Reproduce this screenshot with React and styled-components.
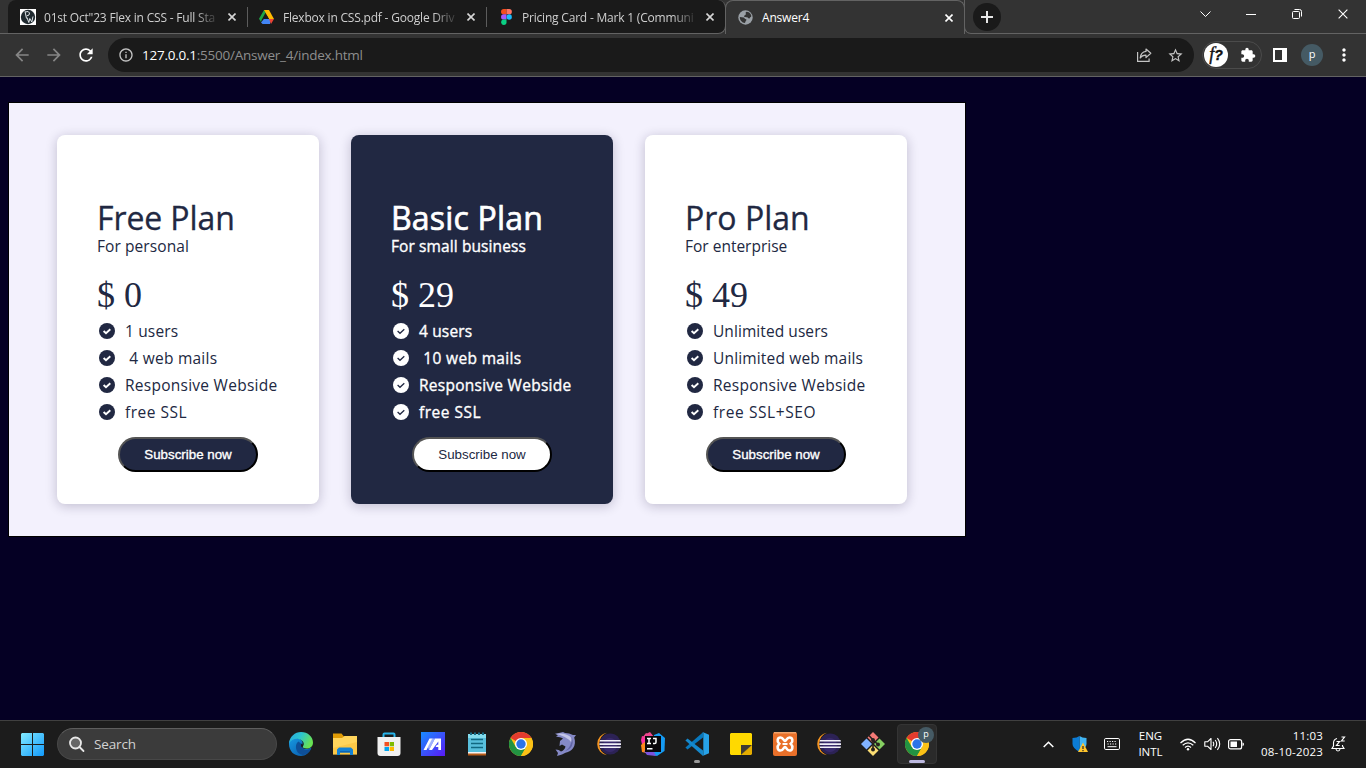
import React from "react";
import styled, { createGlobalStyle } from "styled-components";
import { MdArrowBack, MdArrowForward, MdRefresh, MdExtension, MdStarBorder, MdInfoOutline, MdMoreVert } from "react-icons/md";

const Global = createGlobalStyle`
  * { box-sizing: border-box; }
  body { margin: 0; background: #050024; overflow: hidden; }
  svg { display: block; flex: none; }
`;

const ui = `"Open Sans", "Noto Sans", sans-serif`;

const Screen = styled.div`
  width: 1366px;
  height: 768px;
  display: flex;
  flex-direction: column;
  font-family: ${ui};
`;

/* ---------- browser chrome ---------- */
const TabStrip = styled.div`
  height: 34px;
  flex: none;
  display: flex;
  background: #333333;
`;
const StripEdge = styled.div`
  width: 8px;
  border-bottom: 1px solid #636363;
`;
const InactiveTabs = styled.div`
  display: flex;
  width: 718px;
  background: #1a1a1a;
  border-radius: 8px 8px 8px 0;
  border-bottom: 1px solid #636363;
  border-right: 1px solid #636363;
`;
const Tab = styled.div`
  width: 239px;
  flex: none;
  height: 33px;
  display: flex;
  align-items: center;
  padding: 1px 11px 0 12px;
  position: relative;
`;
const TabDivider = styled.i`
  position: absolute;
  right: -1px;
  top: 7px;
  width: 1px;
  height: 20px;
  background: #5c5c5c;
`;
const ActiveTab = styled(Tab)`
  height: 34px;
  width: 240px;
  margin-left: -1px;
  padding: 0 11px 0 12px;
  background: #333333;
  border: 1px solid #636363;
  border-bottom: 0;
  border-radius: 8px 8px 0 0;
`;
const TabTitle = styled.span`
  width: 176px;
  margin-left: 8px;
  white-space: nowrap;
  font-size: 12px;
  letter-spacing: -0.2px;
  color: ${(p) => (p.$active ? "#ffffff" : "#cfcfcf")};
  mask-image: ${(p) => (p.$active ? "none" : "linear-gradient(90deg, #000 150px, transparent 176px)")};
`;
const TabClose = styled.span`
  margin-left: auto;
  display: flex;
`;
const StripRest = styled.div`
  flex: 1;
  display: flex;
  border-bottom: 1px solid #636363;
  border-left: 1px solid #636363;
  border-bottom-left-radius: 7px;
  margin-left: -1px;
  background: #333;
`;
const NewTab = styled.div`
  width: 28px;
  height: 28px;
  margin: 3px 0 0 8px;
  border-radius: 50%;
  background: #1a1a1a;
  display: grid;
  place-items: center;
`;
const WindowControls = styled.div`
  margin-left: auto;
  display: flex;
  height: 28px;
`;
const WindowButton = styled.div`
  width: 46px;
  display: grid;
  place-items: center;
`;

const Toolbar = styled.div`
  height: 43px;
  flex: none;
  display: flex;
  align-items: center;
  background: #333333;
  border-bottom: 1px solid #636363;
  padding-left: 12px;
`;
const NavButton = styled.span`
  width: 20px;
  margin-right: 12px;
  color: ${(p) => (p.$off ? "#868686" : "#ffffff")};
`;
const AddressBar = styled.div`
  width: 1086px;
  height: 34px;
  border-radius: 17px;
  background: #1a1a1a;
  display: flex;
  align-items: center;
  padding: 0 10px 0 10px;
  color: #c4c4c4;
`;
const Url = styled.span`
  margin-left: 8px;
  flex: 1;
  font-size: 13.5px;
  letter-spacing: -0.24px;
  color: #8e8e8e;
  b { font-weight: 400; color: #fff; }
`;
const StarSlot = styled.span`
  margin-left: 15px;
`;
const Extensions = styled.div`
  margin-left: 8px;
  width: 60px;
  height: 28px;
  border: 1px solid #4b4b4b;
  border-radius: 14px;
  display: flex;
  align-items: center;
  color: #fff;
`;
const FontBadge = styled.span`
  width: 24px;
  height: 24px;
  margin-left: 1px;
  border-radius: 50%;
  background: #fff;
  color: #111;
  font: italic 400 18px/22px "Liberation Serif", serif;
  -webkit-text-stroke: 0.4px #111;
  text-align: center;
  b { font: italic 700 14px "Liberation Sans", sans-serif; }
`;
const PuzzleSlot = styled.span`
  margin-left: 12px;
`;
const SidePanel = styled.span`
  margin-left: 11px;
  width: 14px;
  height: 14px;
  border: 2px solid #fff;
  border-right-width: 5px;
`;
const Avatar = styled.span`
  width: ${(p) => p.$size}px;
  height: ${(p) => p.$size}px;
  border-radius: 50%;
  background: #455a64;
  color: #fff;
  font-size: ${(p) => p.$font}px;
  line-height: ${(p) => p.$size - 3}px;
  text-align: center;
`;
const ToolbarAvatar = styled(Avatar)`
  margin: 0 11px 0 14px;
`;

/* ---------- page ---------- */
const Page = styled.main`
  flex: 1;
  padding: 25px 0 0 8px;
  background: #050024;
`;
const Board = styled.section`
  width: 958px;
  height: 435px;
  border: 1px solid #000;
  background: #f3f1fd;
  padding: 32px 48px;
  display: flex;
  gap: 32px;
`;
const Card = styled.article`
  width: 262px;
  height: 369px;
  flex: none;
  padding: 61px 0 0 40px;
  border-radius: 8px;
  background: ${(p) => (p.$dark ? "#212842" : "#ffffff")};
  color: ${(p) => (p.$dark ? "#ffffff" : "#212842")};
  -webkit-text-stroke: ${(p) => (p.$dark ? "0.35px #fff" : "0")};
  box-shadow: 0 2px 12px rgba(30, 20, 60, 0.24);
`;
const PlanName = styled.h1`
  margin: 0;
  font-size: 32px;
  font-weight: 400;
  line-height: 44px;
  letter-spacing: ${(p) => p.$ls}px;
  white-space: nowrap;
  -webkit-text-stroke: ${(p) => (p.$dark ? "0.7px #fff" : "0.3px #212842")};
`;
const Audience = styled.p`
  margin: -5px 0 0;
  font-size: 15.5px;
  line-height: 22px;
  letter-spacing: ${(p) => p.$ls}px;
`;
const Price = styled.div`
  margin-top: 17px;
  font: 36px/42px "Liberation Serif", serif;
  -webkit-text-stroke: 0;
`;
const Features = styled.ul`
  list-style: none;
  margin: 1px 0 0;
  padding: 0 0 0 2px;
`;
const Feature = styled.li`
  height: 27px;
  display: flex;
  align-items: center;
  font-size: 15.5px;
  letter-spacing: ${(p) => p.$ls}px;
  white-space: pre;
  svg { margin-right: 10px; }
`;
const Subscribe = styled.button`
  display: block;
  width: 140px;
  height: 35px;
  margin: 12px 0 0 21px;
  padding: 0;
  border: 2px outset #000;
  border-radius: 20px;
  background: ${(p) => (p.$dark ? "#ffffff" : "#212842")};
  color: ${(p) => (p.$dark ? "#212842" : "#ffffff")};
  -webkit-text-stroke: ${(p) => (p.$dark ? "0" : "0.35px #fff")};
  font: 13.33px "Liberation Sans", Arial, sans-serif;
`;

/* ---------- taskbar ---------- */
const Taskbar = styled.footer`
  height: 48px;
  flex: none;
  display: flex;
  align-items: center;
  background: #1c1c1c;
  border-top: 1px solid #404040;
  padding: 0 0 1px 21px;
  color: #fff;
`;
const SearchBox = styled.div`
  width: 220px;
  height: 32px;
  margin: 0 2px 0 13px;
  border-radius: 16px;
  border: 1px solid #474747;
  border-top-color: #5e5e5e;
  background: #3b3b3b;
  display: flex;
  align-items: center;
  padding-left: 10px;
  gap: 9px;
  font-size: 13.5px;
  letter-spacing: -0.15px;
  color: #d2d2d2;
`;
const AppSlot = styled.div`
  width: 40px;
  height: 40px;
  margin: 0 2px;
  border-radius: 4px;
  border: 1px solid ${(p) => (p.$active ? "#343434" : "transparent")};
  background: ${(p) => (p.$active ? "#2a2a2a" : "transparent")};
  display: grid;
  place-items: center;
  position: relative;
  &::after {
    content: "";
    display: ${(p) => (p.$mark ? "block" : "none")};
    position: absolute;
    bottom: 0;
    left: calc(50% - ${(p) => p.$mark / 2}px);
    width: ${(p) => p.$mark}px;
    height: 3px;
    border-radius: 2px;
    background: ${(p) => (p.$active ? "#bdb9e0" : "#9a9a9a")};
  }
`;
const CornerAvatar = styled(Avatar)`
  position: absolute;
  right: 2px;
  top: 2px;
`;
const Tray = styled.div`
  margin-left: auto;
  display: flex;
  align-items: center;
  width: 330px;
  font-size: 11.5px;
  line-height: 16px;
  letter-spacing: 0;
`;
const TrayItem = styled.div`
  width: ${(p) => p.$w}px;
  display: flex;
  justify-content: center;
  text-align: center;
`;
const Clock = styled.div`
  width: 76px;
  text-align: right;
  white-space: nowrap;
  letter-spacing: 0.2px;
`;

/* ---------- icons ---------- */
const Cross = ({ size = 8, color = "#d6d6d6", w = 1.6 }) => (
  <svg width={size} height={size} viewBox="0 0 8 8" stroke={color} strokeWidth={w} fill="none"><path d="M.5.5l7 7M7.5.5l-7 7" /></svg>
);
const Check = ({ dark }) => (
  <svg width="16" height="16" viewBox="0 0 16 16" fill="none">
    <circle cx="8" cy="8" r="8" fill={dark ? "#fff" : "#212842"} />
    <path d="M4.6 8l2.4 2.300 4.300-4" stroke={dark ? "#212842" : "#fff"} strokeWidth={dark ? 1.3 : 1.9} />
  </svg>
);
const PwIcon = () => (
  <svg width="16" height="16" viewBox="0 0 16 16" fill="none">
    <path fill="#fff" d="M0 0h16v16H0z" /><circle cx="8" cy="8" r="7.2" fill="#202a30" />
    <path d="M5 2.500l1.500 7M5 3q4-1.500 4.500 1T6.500 7M7 8.500l1.800 5 1-4 2 3.500L13 7.500" stroke="#dfe5e8" strokeWidth="1" />
  </svg>
);
const DriveIcon = () => (
  <svg width="15" height="14" viewBox="0 0 15 14">
    <path fill="#1ea446" d="M5 0h3L2.700 9.700 2 12 0 8.800z" /><path fill="#0f8a3c" d="M5 0h2.500v4.500z" />
    <path fill="#ffba00" d="M5 0h5l5 9h-5z" /><path fill="#1a1a1a" d="M7.500 4.700L9.900 9H5.100z" />
    <path fill="#4285f4" d="M4.900 9H12l-1 5H3.600L2 12.400z" /><path fill="#ea4335" d="M10 9h5l-3 5z" />
  </svg>
);
const FigmaIcon = () => (
  <svg width="11" height="16" viewBox="0 0 11 16">
    <path fill="#f24e1e" d="M5.500 0H2.700a2.650 2.650 0 000 5.300h2.800z" /><path fill="#ff7262" d="M5.500 0h2.700a2.650 2.650 0 010 5.300H5.500z" />
    <path fill="#a259ff" d="M5.500 5.300H2.700a2.650 2.650 0 000 5.300h2.800z" /><circle cx="8.200" cy="8" r="2.650" fill="#1abcfe" />
    <path fill="#0acf83" d="M5.500 10.600H2.700a2.650 2.650 0 102.800 2.700z" />
  </svg>
);
const GlobeIcon = () => (
  <svg width="15" height="15" viewBox="0 0 15 15">
    <circle cx="7.500" cy="7.500" r="7.200" fill="#9aa0a6" />
    <path fill="#333" d="M8.500 1.800c2.200 0 4.200 1.600 4.800 4 .1 1.300-1 1-1.500 2.100-.5 1-1.600.5-2-.5L7.200 7C6 7 5.800 6.200 6.500 5.400L8.200 4c-.8-.5-.9-1.500.3-2.200zM1.800 7l3.800.6c1.100.3.9 1.300 1.700 1.500 1.400.2 1.500 1.100.6 1.700-.6.5-.3 1.400-1 2.200C4 12.700 1.700 10.300 1.800 7z" />
  </svg>
);
const ShareIcon = () => (
  <svg width="16" height="16" viewBox="0 0 16 16" fill="none" stroke="#c4c4c4" strokeWidth="1.200">
    <path d="M1.600 5v9.400h11.500V11.500" /><path d="M10 2l4.800 4.300L10 10.600V8.200C7.600 8.100 5.500 9 4.200 11c.3-3.200 2-6.100 5.800-6.600z" strokeLinejoin="round" />
  </svg>
);
const StartIcon = () => (
  <svg width="23" height="23" viewBox="0 0 23 23">
    <defs><linearGradient id="win" x2="1" y2="1"><stop stopColor="#82eaff" /><stop offset="1" stopColor="#1199fb" /></linearGradient></defs>
    <path fill="url(#win)" d="M1 0h10v11H0V1zM12 0h10l1 1v10H12zM0 12h11v11H1l-1-1zM12 12h11v10l-1 1H12z" />
  </svg>
);
const EdgeIcon = () => (
  <svg width="24" height="24" viewBox="0 0 24 24">
    <defs>
      <linearGradient id="edgeTop" x2="1" y2=".4"><stop stopColor="#26a3df" /><stop offset=".5" stopColor="#2cc5cf" /><stop offset="1" stopColor="#68e254" /></linearGradient>
      <linearGradient id="edgeLow" x2="1" y2="1"><stop stopColor="#1799e1" /><stop offset="1" stopColor="#0755a8" /></linearGradient>
    </defs>
    <path fill="url(#edgeLow)" d="M0 11c1-5 5.500-6 9.500-4.500C13 7.700 14 10 13.500 12c-2 3 1 5.500 4.500 5 2-.3 3-1 4.500-1.500C20.500 21 16.500 24 12 24 5 24 0 19 0 12z" />
    <path fill="#0e4f98" d="M9.500 9.500C6 12 6 18 10 21.500c4 3 9.500 1 12-5-3 2.500-9.500 2-9-4z" />
    <path fill="url(#edgeTop)" d="M0 11.500C.5 4.500 6 0 12 0c7 0 12 5 12 10.500 0 4-3 6-6.500 6-3 0-4.300-1-3.500-2.200 1.500-2 .8-4.500-1.500-6C8 5.200 2.500 7 0 11.500z" />
    <path fill="#1c1c1c" d="M12.500 11.500q1.500 1 1 2.500-1 1 .3 2-2-1-1.800-3z" />
  </svg>
);
const FolderIcon = () => (
  <svg width="26" height="24" viewBox="0 0 26 24">
    <path fill="#e09b05" d="M1 1.500h8.500L12 4.500h12V9H1z" /><path fill="#ffd55c" d="M1 6h9l2.500-2H25v18.500H1z" />
    <path fill="#f7b92f" d="M1 16l24-6v12.500H1z" opacity=".45" /><path fill="#1282d6" d="M5 23v-5.500L7 15.500h12l2 2V23h-3v-2.500H8V23z" /><path fill="#0b65b5" d="M8 19h10v1.500H8z" />
  </svg>
);
const StoreIcon = () => (
  <svg width="24" height="24" viewBox="0 0 24 24">
    <path d="M6.500 6V2.500q0-1 1-1h9q1 0 1 1V6" fill="none" stroke="#27b4ea" strokeWidth="2" />
    <path fill="#f0f0f0" d="M.5 5h23v16q0 3-3 3h-17q-3 0-3-3z" />
    <path fill="#f25022" d="M7.500 10H12v4.300H7.500z" /><path fill="#7fba00" d="M12.700 10H17v4.300h-4.300z" /><path fill="#00a4ef" d="M7.500 15H12v4H7.500z" /><path fill="#ffb900" d="M12.700 15H17v4h-4.300z" />
  </svg>
);
const ArmouryIcon = () => (
  <svg width="24" height="24" viewBox="0 0 24 24">
    <defs><linearGradient id="asus" x1="0" y1="0" x2="1" y2="1"><stop stopColor="#188cff" /><stop offset="1" stopColor="#5a19f5" /></linearGradient></defs>
    <path fill="url(#asus)" d="M0 0h24v24H0z" /><path fill="#fff" d="M2.500 18L8.500 6.500h3L5.500 18zM8 18l6-11.500h6V18h-2.700v-3h-2.800l1.400-2.300h1.400V9.500L11 18z" /><path fill="#cbd5ff" d="M8 18l6-11.500h-3L6.800 14.800z" opacity=".7" />
  </svg>
);
const NotepadIcon = () => (
  <svg width="20" height="24" viewBox="0 0 20 24">
    <path fill="#b65b19" d="M1 20h18v3.500H1z" /><path fill="#f3f3f3" d="M1 18h18v3.500H1z" /><path fill="#58bfdc" d="M1 2h18v18H1z" /><path fill="#83dced" d="M1 2h18v4H1z" />
    <path d="M4 .5v2.500M8 .5v2.500M12 .5v2.500M16 .5v2.500" stroke="#176d87" strokeWidth="2" /><path d="M4 7.500h12M4 11.500h12M4 15.500h12" stroke="#116881" strokeWidth="1.500" />
  </svg>
);
const ChromeIcon = () => (
  <svg width="24" height="24" viewBox="0 0 24 24">
    <circle cx="12" cy="12" r="12" fill="#fbc116" /><path fill="#e33b2e" d="M12 12L1.600 6A12 12 0 0122.400 6H12z" />
    <path fill="#229342" d="M1.600 6a12 12 0 0010.400 18l5.200-9L12 12 6.800 15z" /><path fill="#fbc116" d="M12 24l5.200-9c1-2 1-6-1.200-9h6.400A12 12 0 0112 24z" />
    <circle cx="12" cy="12" r="6" fill="#fff" /><circle cx="12" cy="12" r="4.700" fill="#2b73e8" />
  </svg>
);
const DolphinIcon = () => (
  <svg width="24" height="24" viewBox="0 0 24 24">
    <path fill="#8589c6" d="M2 1.800L6 1l4-1 2 1c3 0 5.500.8 8 2h3l-1.800 2.500c1.300 4 1 8-1.200 10.800-1.500 2.300-4 3.700-7.500 4.500L9 22.500l-5 1.500 1-3-2.500-3.500c2.500.2 4 .8 5.500 2 2.500-1 4-2.500 4.500-5L9 12.500 6.500 14l.5-5 3-2.500C8 5.500 6 5 3 4.500l2-1.200z" />
    <path fill="#c3c5e8" d="M3 2c6-1.500 12 0 15.500 4 1.300 2 1.500 5 .5 8-.3-4-2-6-5-7.500C11 4.500 8 3 3 2z" /><path fill="#6165a8" d="M18.500 5c2.500 5 1.500 9-2 12-1.500 1-3 1.500-4.500 2 5-3 7-8 6.500-14z" />
  </svg>
);
const EclipseIcon = () => (
  <svg width="24" height="24" viewBox="0 0 24 24">
    <path fill="#f7941e" d="M10 .800A11.300 11.300 0 0010 23.200 12 12 0 0110 .800z" /><circle cx="13.200" cy="12" r="10.600" fill="#2c2255" /><circle cx="13" cy="13" r="7" fill="#41307c" opacity=".6" />
    <path fill="#f1f0f7" d="M3 8h20.500l.5 1.600H2.600zM2.400 11.200H24v1.700H2.400zM2.600 14.400H24l-.5 1.600H3z" />
  </svg>
);
const IntellijIcon = () => (
  <svg width="24" height="24" viewBox="0 0 24 24">
    <path fill="#fc31a0" d="M1 4l8 2-2 15-5-4-2-9z" /><path fill="#ff8a1b" d="M0 13l5-4 4 13-8-2z" /><path fill="#f0458f" d="M5 2l4-2 4 5zM1 6l4-5 9 5H3z" /><path fill="#159bf3" d="M13 3l5-2 6 5-.5 13-7.500 5-8-2z" /><path fill="#7b52dd" d="M3 19l9-1 3 6-9-1z" />
    <path fill="#09070b" d="M4 4h16v16H4z" />
    <path fill="none" stroke="#fff" strokeWidth="1.500" d="M6 6.500h4M8 6.500v5M6 11.500h4M12 6.500h3v3.700q0 1.300-1.300 1.300H12M6 16.800h5.500" />
  </svg>
);
const VscodeIcon = () => (
  <svg width="24" height="24" viewBox="0 0 24 24">
    <path fill="#0878bd" d="M.4 15.500L2.500 17.400 18 5.500V.200z" /><path fill="#1588cc" d="M.4 8.500L2.500 6.600 18 18.500V24z" /><path fill="#27a2e8" d="M17.500 0L24 2.700v18.600L17.500 24q.8-.5.8-1.500v-21q0-1-.8-1.500z" />
  </svg>
);
const StickyIcon = () => (
  <svg width="22" height="22" viewBox="0 0 22 22"><path fill="#ffd900" d="M1 0h20l1 1v11l-11 10H1l-1-1V1z" /><path fill="#3f3b34" d="M11 12h11L11 22z" /><path fill="#e5ad00" d="M22 12v9l-1 1H11z" /></svg>
);
const XamppIcon = () => (
  <svg width="24" height="24" viewBox="0 0 24 24" fill="none">
    <rect width="24" height="24" rx="2" fill="#e9702a" /><path fill="#f0a46d" d="M1 0h22v1.500H1z" />
    <path d="M7.500 5.500c3 0 3 3.500 4.500 3.500s1.500-3.500 4.500-3.500 4 4 1.300 6.300c2.700 2.700 1.700 6.700-1.300 6.700s-3-3.500-4.500-3.500-1.500 3.500-4.500 3.500-4-4-1.300-6.700C3.500 9.500 4.500 5.500 7.500 5.500z" stroke="#fff" strokeWidth="2.600" />
    <path d="M9.500 12h5" stroke="#fff" strokeWidth="2" />
  </svg>
);
const GitIcon = () => (
  <svg width="24" height="24" viewBox="0 0 24 24">
    <path fill="#f37a76" d="M12 0l5.500 5.500L12 11 6.500 5.500z" /><path fill="#80b2ff" d="M5.500 6.500L11 12l-5.500 5.500L0 12z" /><path fill="#85cf61" d="M18.500 6.500L24 12l-5.500 5.500L13 12z" /><path fill="#fbdd73" d="M12 13l5.500 5.500L12 24l-5.500-5.500z" />
    <path d="M8 3.500l4 4.500v9M12 8l5 4.500" fill="none" stroke="#27221f" strokeWidth="1.600" /><g fill="#27221f"><circle cx="12" cy="8" r="2" /><circle cx="17" cy="12.500" r="2" /><circle cx="12" cy="17.500" r="2" /></g>
  </svg>
);
const ShieldIcon = () => (
  <svg width="16" height="17" viewBox="0 0 16 17">
    <path fill="#41b5f3" d="M7.500 0Q10 2 14.500 2v6q0 4-7 8z" /><path fill="#0c7cd5" d="M7.500 0Q5 2 .5 2v6q0 4 7 8z" />
    <path fill="#ffc52b" d="M11 6.500l5 9.500H6z" /><path d="M11 10v3M11 14v1.200" stroke="#222" strokeWidth="1.200" />
  </svg>
);
const KeyboardIcon = () => (
  <svg width="16" height="12" viewBox="0 0 16 12" fill="none" stroke="#fff">
    <rect x=".5" y=".5" width="15" height="11" rx="1.300" /><path d="M3 3.500h10M3.500 6h10" strokeDasharray="1.200 1.300" strokeWidth="1.200" /><path d="M3.500 8.700h9" />
  </svg>
);
const WifiIcon = () => (
  <svg width="16" height="13" viewBox="0 0 16 13" fill="none" stroke="#fff" strokeWidth="1.200">
    <path d="M.5 5Q8-2.500 15.500 5M2.700 7.300q5.300-5 10.600 0M5 9.500q3-2.800 6 0" /><circle cx="8" cy="11.200" r="1.200" fill="#fff" stroke="none" />
  </svg>
);
const SpeakerIcon = () => (
  <svg width="17" height="14" viewBox="0 0 17 14" fill="none" stroke="#fff" strokeWidth="1.100">
    <path d="M.8 4.800h2.700L7 1.500v11L3.500 9.200H.8zM9 4.800q1.500 2.200 0 4.400M11.200 3q3 4 0 8M13.400 1.200q4.600 5.800 0 11.600" strokeLinejoin="round" />
  </svg>
);
const BatteryIcon = () => (
  <svg width="16" height="11" viewBox="0 0 16 11"><rect x=".6" y=".6" width="13" height="9.300" rx="2" fill="none" stroke="#fff" strokeWidth="1.200" /><path fill="#fff" d="M2.500 2.500H9v5.600H2.500zM14.500 3.500q1.500 0 1.500 1.700T14.500 7z" /></svg>
);
const BellIcon = () => (
  <svg width="15" height="16" viewBox="0 0 15 16" fill="none" stroke="#fff" strokeWidth="1.100">
    <path d="M6 2.500Q2.500 3.500 2.500 7v3L1 12.500h12L11.500 10V9M5 13q.3 2 2 2t2-2" /><path d="M5.500 5.500h3l-3 4h3.200M10.500 1h3l-3 4h3.200" strokeWidth="1.200" />
  </svg>
);

/* ---------- data ---------- */
const tabs = [
  { title: '01st Oct"23 Flex in CSS - Full Sta', icon: <PwIcon /> },
  { title: "Flexbox in CSS.pdf - Google Driv", icon: <DriveIcon /> },
  { title: "Pricing Card - Mark 1 (Communi", icon: <FigmaIcon /> },
];
const FavSlot = styled.span`
  width: 16px;
  display: flex;
  justify-content: ${(p) => (p.$left ? "flex-start" : "center")};
`;
const plans = [
  {
    name: "Free Plan", nls: -0.1, who: "For personal", wls: 0.08, price: "$ 0",
    items: [["1 users", 0.15], [" 4 web mails", 0.25], ["Responsive Webside", 0.26], ["free SSL", 0.5]],
  },
  {
    name: "Basic Plan", nls: 0.2, who: "For small business", wls: 0.1, price: "$ 29", dark: true,
    items: [["4 users", 0.15], [" 10 web mails", 0.33], ["Responsive Webside", 0.26], ["free SSL", 0.5]],
  },
  {
    name: "Pro Plan", nls: 0, who: "For enterprise", wls: 0, price: "$ 49",
    items: [["Unlimited users", 0.07], ["Unlimited web mails", 0.16], ["Responsive Webside", 0.26], ["free SSL+SEO", 0.58]],
  },
];
const apps = [EdgeIcon, FolderIcon, StoreIcon, ArmouryIcon, NotepadIcon, ChromeIcon, DolphinIcon, EclipseIcon, IntellijIcon];

export default function App() {
  return (
    <Screen>
      <Global />
      <TabStrip>
        <StripEdge />
        <InactiveTabs>
          {tabs.map((t, i) => (
            <Tab key={t.title}>
              <FavSlot $left={i === 1}>{t.icon}</FavSlot>
              <TabTitle>{t.title}</TabTitle>
              <TabClose><Cross /></TabClose>
              {i < 2 && <TabDivider />}
            </Tab>
          ))}
        </InactiveTabs>
        <ActiveTab>
          <FavSlot $left><GlobeIcon /></FavSlot>
          <TabTitle $active>Answer4</TabTitle>
          <TabClose><Cross color="#fff" /></TabClose>
        </ActiveTab>
        <StripRest>
          <NewTab><svg width="12" height="12" viewBox="0 0 12 12" stroke="#e6e6e6" strokeWidth="2"><path d="M6 0v12M0 6h12" /></svg></NewTab>
          <WindowControls>
            <WindowButton><svg width="11" height="7" viewBox="0 0 11 7" stroke="#fff" fill="none"><path d="M.5.500l5 5 5-5" /></svg></WindowButton>
            <WindowButton><svg width="10" height="1" viewBox="0 0 10 1"><path fill="#fff" d="M0 0h10v1H0z" /></svg></WindowButton>
            <WindowButton><svg width="10" height="10" viewBox="0 0 10 10" stroke="#fff" fill="none"><rect x=".5" y="2.500" width="7" height="7" rx="1" /><path d="M2.500.500h5q2 0 2 2v5" /></svg></WindowButton>
            <WindowButton><Cross size={10} color="#fff" w={0.9} /></WindowButton>
          </WindowControls>
        </StripRest>
      </TabStrip>

      <Toolbar>
        <NavButton $off><MdArrowBack size={20} /></NavButton>
        <NavButton $off><MdArrowForward size={20} /></NavButton>
        <NavButton><MdRefresh size={20} /></NavButton>
        <AddressBar>
          <MdInfoOutline size={16} />
          <Url><b>127.0.0.1</b>:5500/Answer_4/index.html</Url>
          <ShareIcon />
          <StarSlot><MdStarBorder size={17} /></StarSlot>
        </AddressBar>
        <Extensions>
          <FontBadge>f<b>?</b></FontBadge>
          <PuzzleSlot><MdExtension size={16} /></PuzzleSlot>
        </Extensions>
        <SidePanel />
        <ToolbarAvatar $size={22} $font={11}>p</ToolbarAvatar>
        <MdMoreVert size={20} color="#fff" />
      </Toolbar>

      <Page>
        <Board>
          {plans.map((p) => (
            <Card key={p.name} $dark={p.dark}>
              <PlanName $ls={p.nls} $dark={p.dark}>{p.name}</PlanName>
              <Audience $ls={p.wls}>{p.who}</Audience>
              <Price>{p.price}</Price>
              <Features>
                {p.items.map(([text, ls]) => (
                  <Feature key={text} $ls={ls}><Check dark={p.dark} /><span>{text}</span></Feature>
                ))}
              </Features>
              <Subscribe $dark={p.dark}>Subscribe now</Subscribe>
            </Card>
          ))}
        </Board>
      </Page>

      <Taskbar>
        <StartIcon />
        <SearchBox>
          <svg width="17" height="17" viewBox="0 0 17 17" fill="none" stroke="#e8e8e8" strokeWidth="1.800"><circle cx="7.500" cy="7" r="5.500" fill="#666" /><path d="M11.500 11l4 4" strokeLinecap="round" /></svg>
          Search
        </SearchBox>
        {apps.map((Icon, i) => <AppSlot key={i}><Icon /></AppSlot>)}
        <AppSlot $mark={6}><VscodeIcon /></AppSlot>
        <AppSlot><StickyIcon /></AppSlot>
        <AppSlot><XamppIcon /></AppSlot>
        <AppSlot><EclipseIcon /></AppSlot>
        <AppSlot><GitIcon /></AppSlot>
        <AppSlot $active $mark={16}><ChromeIcon /><CornerAvatar $size={16} $font={9}>p</CornerAvatar></AppSlot>
        <Tray>
          <TrayItem $w={24}><svg width="11" height="7" viewBox="0 0 11 7" stroke="#fff" strokeWidth="1.500" fill="none"><path d="M.7 6l4.800-4.800L10.300 6" /></svg></TrayItem>
          <TrayItem $w={40}><ShieldIcon /></TrayItem>
          <TrayItem $w={24}><KeyboardIcon /></TrayItem>
          <TrayItem $w={53}>ENG<br />INTL</TrayItem>
          <TrayItem $w={22}><WifiIcon /></TrayItem>
          <TrayItem $w={26}><SpeakerIcon /></TrayItem>
          <TrayItem $w={22}><BatteryIcon /></TrayItem>
          <Clock>11:03<br />08-10-2023</Clock>
          <TrayItem $w={31}><BellIcon /></TrayItem>
        </Tray>
      </Taskbar>
    </Screen>
  );
}
